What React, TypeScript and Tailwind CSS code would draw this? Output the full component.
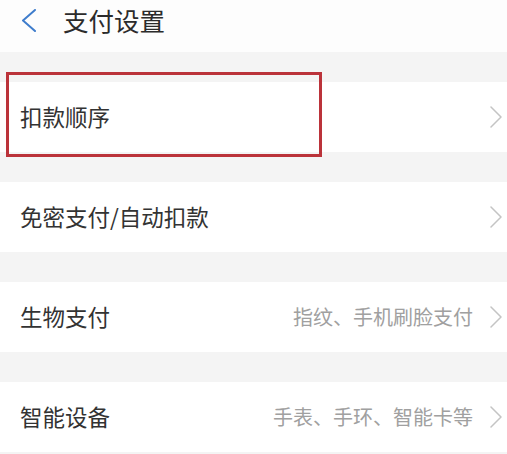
const rows = [
  { title: "扣款顺序", hint: "" },
  { title: "免密支付/自动扣款", hint: "" },
  { title: "生物支付", hint: "指纹、手机刷脸支付" },
  { title: "智能设备", hint: "手表、手环、智能卡等" },
];

function Arrow({ dir, className }: { dir: "left" | "right"; className: string }) {
  const points = dir === "left" ? "14,1 2,11.5 14,22" : "1,1 11,11 1,21";
  return (
    <svg viewBox={dir === "left" ? "0 0 16 23" : "0 0 12 22"} className={className} fill="none">
      <polyline points={points} stroke="currentColor" strokeWidth={dir === "left" ? 2 : 1.5} strokeLinecap="round" strokeLinejoin="round" />
    </svg>
  );
}

export default function App() {
  return (
    <div
      className="relative h-[454px] w-[507px] overflow-hidden bg-[#f4f4f4]"
      style={{ fontFamily: '"Noto Sans CJK SC", "Noto Sans", sans-serif' }}
    >
      <header className="flex h-[52px] items-start bg-[#fdfdfd] pl-[21px] pt-[8px]">
        <Arrow dir="left" className="mt-[1px] h-[23px] w-[16px] text-[#3f7dcc]" />
        <h1 className="ml-[26px] text-[25.5px] leading-[24px] text-[#2b2b2b]">支付设置</h1>
      </header>

      <div className="flex flex-col gap-[30px] pt-[30px]">
        {rows.map((row) => (
          <div key={row.title} className="flex h-[70px] items-center bg-white pl-[20px] pr-[5px]">
            <span className="text-[22.5px] text-[#333]">{row.title}</span>
            <div className="ml-auto flex items-center gap-[17px]">
              {row.hint && <span className="text-[20px] text-[#a0a0a0]">{row.hint}</span>}
              <Arrow dir="right" className="h-[22px] w-[12px] text-[#c4c4c4]" />
            </div>
          </div>
        ))}
      </div>

      {/* annotation box over the first row */}
      <div className="absolute left-[6px] top-[72px] h-[85px] w-[316px] border-[3px] border-[#bb333a]" />
    </div>
  );
}
